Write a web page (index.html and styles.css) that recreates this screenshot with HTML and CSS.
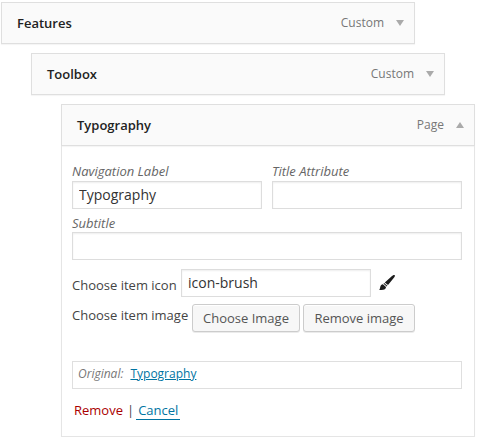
FILE: index.html
```html
<!DOCTYPE html>
<html lang="en">
<head>
<meta charset="utf-8">
<title>Menu structure</title>
<link rel="stylesheet" href="styles.css">
</head>
<body>
<ul class="menu">
  <li class="item">
    <div class="bar"><span class="title">Features</span><span class="type">Custom</span><svg class="arrow" viewBox="0 0 8 6"><path d="M0 0h8L4 6z"/></svg></div>
  </li>
  <li class="item depth-1">
    <div class="bar"><span class="title">Toolbox</span><span class="type">Custom</span><svg class="arrow" viewBox="0 0 8 6"><path d="M0 0h8L4 6z"/></svg></div>
  </li>
  <li class="item depth-2">
    <div class="bar"><span class="title">Typography</span><span class="type">Page</span><svg class="arrow" viewBox="0 0 8 6"><path d="M0 6h8L4 0z"/></svg></div>
    <div class="settings">
      <div class="fields">
        <label class="field"><span class="caption">Navigation Label</span><input class="input" type="text" value="Typography"></label>
        <label class="field"><span class="caption">Title Attribute</span><input class="input" type="text"></label>
        <label class="field wide"><span class="caption">Subtitle</span><input class="input" type="text"></label>
      </div>
      <div class="row icon-row">
        <label class="row-label" for="icon">Choose item icon</label>
        <input class="input icon-input" id="icon" type="text" value="icon-brush">
        <svg class="brush" viewBox="0 0 16 16"><path d="M15.700.2c.5.4.1 1.400-.4 2.100L9 10.100 5.800 7.400 13 1.100c.8-.7 2.100-1.400 2.700-.9zM5.200 8l3.200 2.700-.7.800-3.200-2.700zM3.900 9.300l3.100 2.600c0 1.700-1.300 2.500-2.800 2.800-1.300.3-2.700.4-4 .4.800-1.100.7-2 1.100-3.300.4-1.300 1.200-2.400 2.600-2.500z"/></svg>
      </div>
      <div class="row image-row">
        <span class="row-label">Choose item image</span>
        <button class="button choose" type="button">Choose Image</button>
        <button class="button remove-image" type="button">Remove image</button>
      </div>
      <p class="original"><em>Original:</em><a class="original-link" href="#">Typography</a></p>
      <div class="actions"><a class="remove" href="#">Remove</a><span class="sep">|</span><a class="cancel" href="#">Cancel</a></div>
    </div>
  </li>
</ul>
</body>
</html>
```
FILE: styles.css
```css
* { box-sizing: border-box; }

body {
  margin: 0;
  overflow: hidden;
  background: #fff;
  color: #444;
  font: 13px/20px "Open Sans", sans-serif;
}

.menu {
  display: flex;
  flex-direction: column;
  gap: 9px;
  margin: 0;
  padding: 2px 0 0 1px;
  list-style: none;
}

.item { width: 414px; }
.depth-1 { margin-left: 30px; }
.depth-2 { margin-left: 60px; }

.bar {
  display: flex;
  align-items: center;
  height: 42px;
  padding: 0 10px 0 15px;
  border: 1px solid #dfdfdf;
  background: #fafafa;
  box-shadow: 0 1px 1px rgba(0, 0, 0, .04);
}

.title {
  flex: 1;
  color: #222;
  font-weight: 600;
}

.type {
  margin-right: 12px;
  color: #777;
  font-size: 12px;
}

.arrow {
  width: 8px;
  height: 6px;
  fill: #aaa;
}

.settings {
  height: 291px;
  padding: 15px 12px 0 10px;
  border: 1px solid #e5e5e5;
  border-top: 0;
  box-shadow: 0 1px 1px rgba(0, 0, 0, .04);
}

.fields {
  display: grid;
  grid-template-columns: 190px 190px;
  gap: 3px 10px;
}

.field { display: block; }
.wide { grid-column: span 2; }

.caption {
  display: block;
  height: 20px;
  color: #666;
  font-style: italic;
}

.wide .caption { line-height: 22px; }

.input {
  display: block;
  width: 100%;
  height: 28px;
  margin: 0;
  padding: 0 6px 1px;
  border: 1px solid #ddd;
  border-radius: 0;
  outline: 0;
  background: #fff;
  box-shadow: inset 0 1px 2px rgba(0, 0, 0, .07);
  color: #333;
  font: 14px/20px "Open Sans", sans-serif;
}

.row {
  display: flex;
  align-items: flex-start;
}

.icon-row { margin-top: 9px; }
.icon-row .row-label { padding-top: 6px; }
.row-label { width: 109px; white-space: nowrap; }
.icon-input { width: 190px; }

.brush {
  width: 16px;
  height: 16px;
  margin: 6px 0 0 8px;
  fill: #1c1c1c;
}

.image-row { margin-top: 7px; }
.image-row .row-label { width: 120px; padding-top: 1px; }

.button {
  height: 28px;
  padding: 0;
  border: 1px solid #ccc;
  border-radius: 3px;
  background: #f7f7f7;
  box-shadow: inset 0 1px 0 #fff, 0 1px 0 rgba(0, 0, 0, .08);
  color: #555;
  font: 13px/26px "Open Sans", sans-serif;
  white-space: nowrap;
}

.choose { width: 108px; }
.remove-image { width: 112px; margin-left: 3px; }

.original {
  height: 28px;
  margin: 29px 0 0;
  padding: 2px 5px;
  border: 1px solid #dfdfdf;
  color: #777;
  font-size: 12px;
}

.original-link { margin-left: 7px; color: #0074a2; }

.actions {
  display: flex;
  margin-top: 11px;
  padding-left: 2px;
}

.remove { color: #a00; text-decoration: none; }
.sep { margin: 0 2px 0 4px; }

.cancel {
  height: 20px;
  padding: 0 2px;
  border-bottom: 1px solid #0074a2;
  color: #0074a2;
  text-decoration: none;
}
```
